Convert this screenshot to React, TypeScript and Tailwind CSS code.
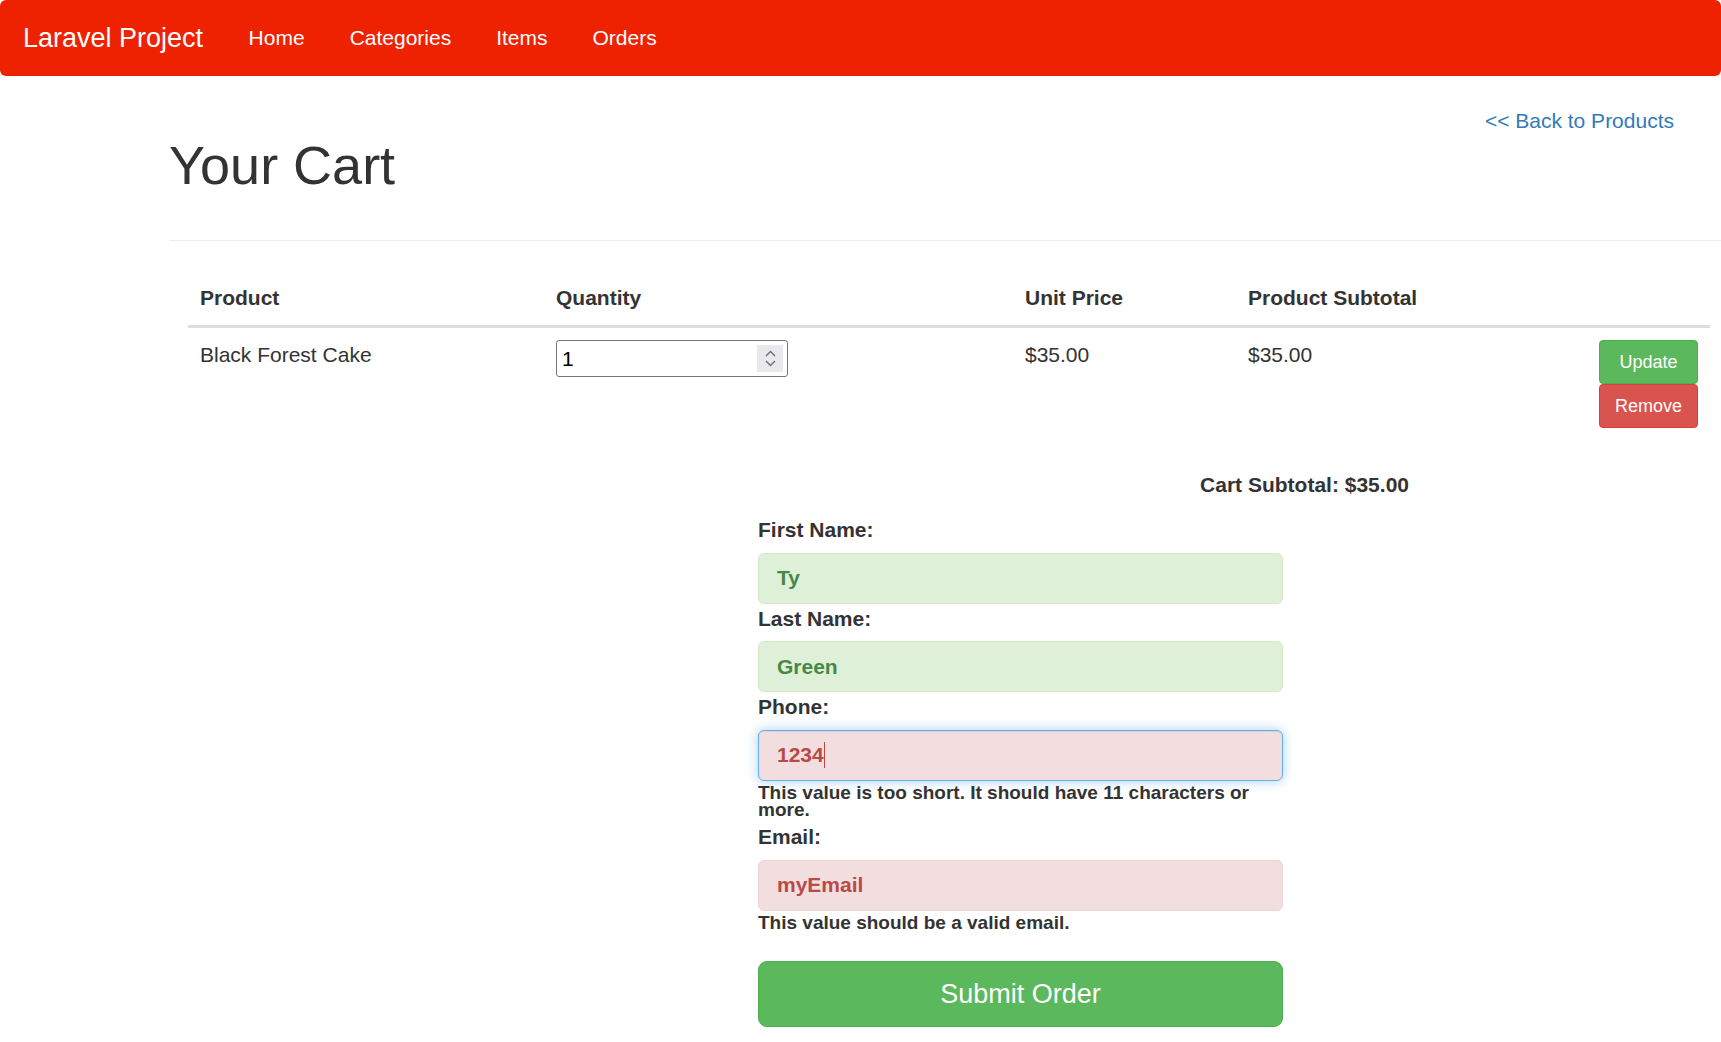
import React from 'react';

const navLinks = ['Home', 'Categories', 'Items', 'Orders'];

function QtyInput() {
    return (
        <div className="flex items-center justify-between w-[232px] h-[37px] border border-[#767676] rounded-[3px] pl-[5px] pr-[4px] bg-white">
            <span className="text-[21px] leading-[30px] text-black">1</span>
            <div className="w-[26px] h-[27px] bg-[#e9e9ed] flex flex-col items-center justify-center gap-[3px]">
                <svg width="11" height="7" viewBox="0 0 11 7" fill="none">
                    <path d="M1 6 L5.5 1.5 L10 6" stroke="#6b6b6b" strokeWidth="1.3" />
                </svg>
                <svg width="11" height="7" viewBox="0 0 11 7" fill="none">
                    <path d="M1 1 L5.5 5.5 L10 1" stroke="#6b6b6b" strokeWidth="1.3" />
                </svg>
            </div>
        </div>
    );
}

interface FieldProps {
    label: string;
    value: string;
    state: 'ok' | 'error';
    focused?: boolean;
    error?: string;
}

function Field({ label, value, state, focused, error }: FieldProps) {
    const box =
        state === 'ok'
            ? 'bg-[#dff0d8] border-[#d6e9c6] text-[#468847]'
            : focused
              ? 'bg-[#f2dede] border-[#66afe9] text-[#b94a48] shadow-[inset_0_1px_1px_rgba(0,0,0,0.075),0_0_12px_rgba(102,175,233,0.6)]'
              : 'bg-[#f2dede] border-[#eed3d7] text-[#b94a48]';
    return (
        <div>
            <label className="block font-bold leading-[30px] mb-[7.5px]">{label}</label>
            <div className={`flex items-center h-[51px] border rounded-[6px] px-[18px] font-bold text-[21px] ${box}`}>
                <span>{value}</span>
                {focused && <span className="w-px h-[26px] bg-[#b94a48]" />}
            </div>
            {error && (
                <ul className="mt-[3px] mb-[4.5px] text-[19px] leading-[17px] font-bold text-[#333]">
                    <li>{error}</li>
                </ul>
            )}
        </div>
    );
}

export default function App() {
    return (
        <div className="min-h-screen bg-white font-['Liberation_Sans',Arial,sans-serif] text-[#333] text-[21px] leading-[30px] pb-[20px]">
            <nav className="h-[76px] bg-[#ee2200] rounded-[6px] flex items-center text-white">
                <a className="px-[23px] text-[27px]">Laravel Project</a>
                {navLinks.map((l) => (
                    <a key={l} className="px-[22.5px] text-[21px]">
                        {l}
                    </a>
                ))}
            </nav>

            <main className="pt-[30px]">
                <div className="flex justify-between items-start pl-[169px] pr-[47px]">
                    <h1 className="mt-[30px] text-[54px] leading-[59px]">Your Cart</h1>
                    <a className="text-[#337ab7]">&lt;&lt; Back to Products</a>
                </div>

                <hr className="ml-[169px] mt-[45px] border-0 border-t border-[#eee]" />

                <table className="ml-[188px] mt-[30px] w-[1522px] table-fixed border-collapse">
                    <colgroup>
                        <col className="w-[356px]" />
                        <col className="w-[469px]" />
                        <col className="w-[223px]" />
                        <col className="w-[351px]" />
                        <col className="w-[123px]" />
                    </colgroup>
                    <thead>
                        <tr className="border-b-[3px] border-[#ddd]">
                            <th className="p-[12px] text-left font-bold">Product</th>
                            <th className="p-[12px] text-left font-bold">Quantity</th>
                            <th className="p-[12px] text-left font-bold">Unit Price</th>
                            <th className="p-[12px] text-left font-bold">Product Subtotal</th>
                            <th className="p-[12px]" />
                        </tr>
                    </thead>
                    <tbody>
                        <tr className="align-top">
                            <td className="p-[12px]">Black Forest Cake</td>
                            <td className="p-[12px]">
                                <QtyInput />
                            </td>
                            <td className="p-[12px]">$35.00</td>
                            <td className="p-[12px]">$35.00</td>
                            <td className="p-[12px]">
                                <div className="flex flex-col">
                                    <button className="h-[44px] bg-[#5cb85c] border border-[#4cae4c] rounded-[4px] text-white text-[18px]">
                                        Update
                                    </button>
                                    <button className="h-[44px] bg-[#d9534f] border border-[#d43f3a] rounded-[4px] text-white text-[18px]">
                                        Remove
                                    </button>
                                </div>
                            </td>
                        </tr>
                    </tbody>
                </table>

                <div className="mt-[30px] w-[1409px] text-right font-bold">Cart Subtotal: $35.00</div>

                <form className="ml-[758px] mt-[15px] w-[525px]">
                    <Field label="First Name:" value="Ty" state="ok" />
                    <Field label="Last Name:" value="Green" state="ok" />
                    <Field
                        label="Phone:"
                        value="1234"
                        state="error"
                        focused
                        error="This value is too short. It should have 11 characters or more."
                    />
                    <Field label="Email:" value="myEmail" state="error" error="This value should be a valid email." />
                    <button
                        type="button"
                        className="mt-[26px] w-full h-[66px] bg-[#5cb85c] border border-[#4cae4c] rounded-[9px] text-white text-[27px]"
                    >
                        Submit Order
                    </button>
                </form>
            </main>
        </div>
    );
}
